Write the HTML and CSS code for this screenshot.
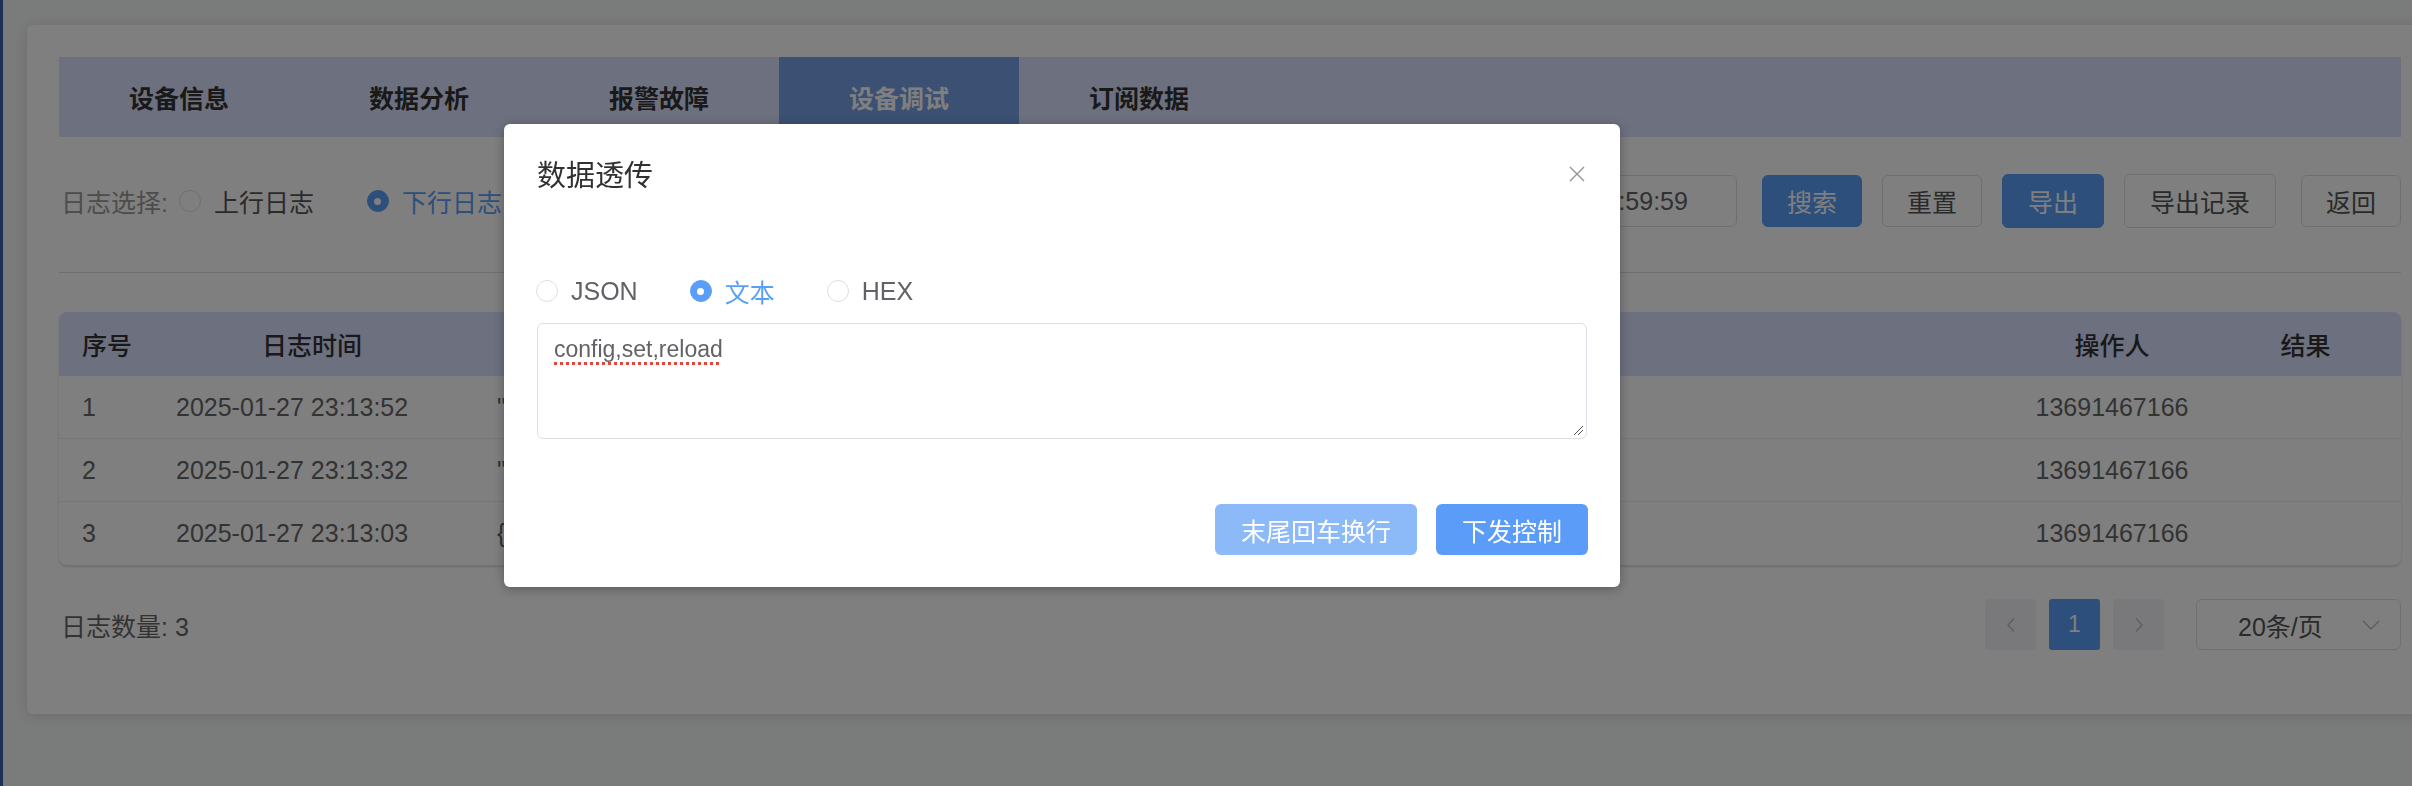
FILE: index.html
```html
<!DOCTYPE html>
<html lang="zh-CN">
<head>
<meta charset="utf-8">
<title>设备调试</title>
<link rel="stylesheet" href="styles.css">
</head>
<body>
<div class="app">
  <aside class="side-edge"></aside>
  <main class="main">
    <section class="card">
      <nav class="tabs">
        <div class="tab">设备信息</div>
        <div class="tab">数据分析</div>
        <div class="tab">报警故障</div>
        <div class="tab tab-active">设备调试</div>
        <div class="tab">订阅数据</div>
      </nav>

      <div class="filter">
        <div class="filter-left">
          <span class="filter-label">日志选择:</span>
          <label class="radio"><span class="radio-dot"></span><span class="radio-text">上行日志</span></label>
          <label class="radio radio-checked"><span class="radio-dot"></span><span class="radio-text">下行日志</span></label>
        </div>
        <div class="filter-right">
          <div class="date-input"><span>2025-01-27 00:00:00</span><span class="date-sep">至</span><span>2025-01-27 23:59:59</span></div>
          <button class="btn btn-primary">搜索</button>
          <button class="btn">重置</button>
          <button class="btn btn-primary btn-tall">导出</button>
          <button class="btn btn-tall">导出记录</button>
          <button class="btn btn-back">返回</button>
        </div>
      </div>

      <div class="divider"></div>

      <div class="table">
        <div class="tr thead">
          <div class="td c-idx">序号</div>
          <div class="td c-time c-center">日志时间</div>
          <div class="td c-center">日志内容</div>
          <div class="td c-center">操作人</div>
          <div class="td c-center">结果</div>
        </div>
        <div class="tr">
          <div class="td c-idx">1</div>
          <div class="td c-time">2025-01-27 23:13:52</div>
          <div class="td c-content">"config,set,reload"</div>
          <div class="td c-center">13691467166</div>
          <div class="td c-center"></div>
        </div>
        <div class="tr">
          <div class="td c-idx">2</div>
          <div class="td c-time">2025-01-27 23:13:32</div>
          <div class="td c-content">"config,get,all"</div>
          <div class="td c-center">13691467166</div>
          <div class="td c-center"></div>
        </div>
        <div class="tr">
          <div class="td c-idx">3</div>
          <div class="td c-time">2025-01-27 23:13:03</div>
          <div class="td c-content">{"cmd":"reboot"}</div>
          <div class="td c-center">13691467166</div>
          <div class="td c-center"></div>
        </div>
      </div>

      <div class="pager">
        <span class="pager-total">日志数量: 3</span>
        <div class="pager-right">
          <button class="page-btn page-nav" aria-label="上一页">
            <svg width="10" height="16" viewBox="0 0 10 16"><path d="M8 1.5 L2 8 L8 14.5" fill="none" stroke="#b8bcc4" stroke-width="1.4"/></svg>
          </button>
          <button class="page-btn page-current">1</button>
          <button class="page-btn page-nav" aria-label="下一页">
            <svg width="10" height="16" viewBox="0 0 10 16"><path d="M2 1.5 L8 8 L2 14.5" fill="none" stroke="#b8bcc4" stroke-width="1.4"/></svg>
          </button>
          <div class="page-size">
            <span class="page-size-text">20条/页</span>
            <svg class="page-size-arrow" width="18" height="10" viewBox="0 0 18 10"><path d="M1 1 L9 9 L17 1" fill="none" stroke="#b8bcc4" stroke-width="1.4"/></svg>
          </div>
        </div>
      </div>
    </section>
  </main>
</div>

<div class="mask"></div>

<div class="dialog" role="dialog" aria-label="数据透传">
  <div class="dialog-header">
    <span class="dialog-title">数据透传</span>
    <button class="dialog-close" aria-label="关闭">
      <svg width="16" height="16" viewBox="0 0 16 16"><path d="M1 1 L15 15 M15 1 L1 15" fill="none" stroke="#909399" stroke-width="1.4"/></svg>
    </button>
  </div>
  <div class="dialog-body">
    <div class="dialog-radios">
      <label class="radio m-radio"><span class="radio-dot"></span><span class="radio-text">JSON</span></label>
      <label class="radio m-radio radio-checked"><span class="radio-dot"></span><span class="radio-text">文本</span></label>
      <label class="radio m-radio"><span class="radio-dot"></span><span class="radio-text">HEX</span></label>
    </div>
    <div class="textarea" role="textbox" aria-multiline="true">
      <span class="misspelled">config,set,reload</span>
      <svg class="grip" width="12" height="12" viewBox="0 0 12 12"><path d="M11 2 L2 11 M11 6 L6 11" fill="none" stroke="#555" stroke-width="1"/></svg>
    </div>
  </div>
  <div class="dialog-footer">
    <button class="d-btn d-btn-light">末尾回车换行</button>
    <button class="d-btn d-btn-primary">下发控制</button>
  </div>
</div>
</body>
</html>
```

FILE: styles.css
```css
* { box-sizing: border-box; }

html, body {
  margin: 0;
  padding: 0;
  width: 2412px;
  height: 786px;
  overflow: hidden;
  font-family: "Liberation Sans", "Noto Sans CJK SC", sans-serif;
  font-size: 25px;
  color: #606266;
  background: #f5f6f7;
}

button {
  font-family: inherit;
  cursor: pointer;
}

.app {
  display: flex;
  height: 786px;
}

.side-edge {
  width: 3px;
  flex-shrink: 0;
  background: #3e62a6;
}

.main {
  flex: 1;
  min-width: 0;
  overflow: hidden;
  padding: 25px 0 0 24px;
  background: #f5f6f7;
}

.card {
  width: 2406px;
  background: #ffffff;
  border-radius: 6px;
  box-shadow: 0 2px 14px rgba(0, 0, 0, 0.12);
  padding: 32px 32px 64px 32px;
}

/* Tabs */
.tabs {
  display: flex;
  height: 80px;
  background: #dbe1fe;
}

.tab {
  width: 240px;
  display: flex;
  align-items: center;
  justify-content: center;
  font-weight: 700;
  color: #333333;
  font-size: 25px;
}

.tab-active {
  background: #77a0e6;
  color: #ffffff;
}

/* Filter row */
.filter {
  margin-top: 37px;
  height: 54px;
  display: flex;
  align-items: center;
  justify-content: space-between;
}

.filter-left {
  display: flex;
  align-items: center;
  padding-left: 2px;
}

.filter-label {
  color: #9a9a9a;
  margin-right: 11px;
}

.radio {
  display: inline-flex;
  align-items: center;
  margin-right: 53px;
  color: #555555;
}

.radio-dot {
  width: 22px;
  height: 22px;
  border-radius: 50%;
  border: 1px solid #dcdfe6;
  background: #ffffff;
  margin-right: 13px;
  flex-shrink: 0;
  position: relative;
}

.radio-checked .radio-dot {
  background: #5b9ef9;
  border-color: #5b9ef9;
}

.radio-checked .radio-dot::after {
  content: "";
  position: absolute;
  left: 50%;
  top: 50%;
  width: 7px;
  height: 7px;
  margin: -3.5px 0 0 -3.5px;
  border-radius: 50%;
  background: #ffffff;
}

.radio-checked .radio-text {
  color: #5b9ef9;
}

.filter-right {
  display: flex;
  align-items: center;
  gap: 20px;
}

.date-input {
  width: 560px;
  height: 52px;
  border: 1px solid #dcdfe6;
  border-radius: 6px;
  display: flex;
  align-items: center;
  justify-content: flex-end;
  padding-right: 48px;
  color: #606266;
  margin-right: 5px;
  white-space: nowrap;
}

.date-sep {
  margin: 0 14px;
}

.btn {
  height: 52px;
  padding: 0 24px;
  border: 1px solid #dcdfe6;
  border-radius: 6px;
  background: #ffffff;
  color: #555555;
  font-size: 25px;
  white-space: nowrap;
}

.btn-primary {
  background: #5b9ef9;
  border-color: #5b9ef9;
  color: #ffffff;
}

.btn-tall {
  height: 54px;
  padding: 0 25px;
}

.btn-back {
  margin-left: 5px;
}

.divider {
  margin-top: 44px;
  height: 1px;
  background: #dcdfe6;
}

/* Table */
.table {
  margin-top: 39px;
  border-radius: 8px;
  overflow: hidden;
  box-shadow: 0 2px 3px rgba(0, 0, 0, 0.14);
}

.tr {
  display: grid;
  grid-template-columns: 91px 324px 1fr 196px 191px;
  height: 63px;
  border-bottom: 1px solid #ebeef5;
  align-items: center;
  color: #666666;
}

.tr:last-child {
  border-bottom: none;
}

.thead {
  height: 64px;
  background: #dbe1fe;
  border-bottom: none;
  color: #333333;
  font-weight: 500;
}

.td {
  white-space: nowrap;
  overflow: hidden;
}

.c-idx { padding-left: 23px; }
.c-time { padding-left: 26px; }
.c-content { padding-left: 23px; }
.c-center { text-align: center; padding-left: 0; }

/* Pager */
.pager {
  margin-top: 34px;
  height: 51px;
  display: flex;
  align-items: center;
  justify-content: space-between;
}

.pager-total {
  padding-left: 2px;
  color: #666666;
}

.pager-right {
  display: flex;
  align-items: center;
  gap: 13px;
}

.page-btn {
  width: 51px;
  height: 51px;
  border: none;
  border-radius: 3px;
  display: flex;
  align-items: center;
  justify-content: center;
  padding: 0;
}

.page-nav {
  background: #f2f3f6;
}

.page-current {
  background: #5b9ef9;
  color: #ffffff;
  font-size: 23px;
}

.page-size {
  margin-left: 19px;
  width: 205px;
  height: 51px;
  border: 1px solid #dcdfe6;
  border-radius: 6px;
  display: flex;
  align-items: center;
  justify-content: space-between;
  padding: 0 20px 0 41px;
  color: #555555;
}

/* Mask and dialog */
.mask {
  position: fixed;
  inset: 0;
  background: rgba(0, 0, 0, 0.5);
  z-index: 10;
}

.dialog {
  position: fixed;
  left: 504px;
  top: 124px;
  width: 1116px;
  background: #ffffff;
  border-radius: 6px;
  box-shadow: 0 2px 12px rgba(0, 0, 0, 0.3);
  z-index: 11;
}

.dialog-header {
  position: relative;
  padding: 32px 33px 0;
  height: 72px;
}

.dialog-title {
  font-size: 29px;
  line-height: 40px;
  color: #303133;
}

.dialog-close {
  position: absolute;
  top: 42px;
  right: 35px;
  width: 16px;
  height: 16px;
  padding: 0;
  border: none;
  background: none;
  display: block;
}

.dialog-close svg { display: block; }

.dialog-body {
  padding: 80px 33px 0;
}

.dialog-radios {
  display: flex;
  align-items: center;
  height: 30px;
  margin-left: -1px;
}

.m-radio {
  margin-right: 52px;
  color: #606266;
}

.textarea {
  position: relative;
  margin-top: 17px;
  height: 116px;
  border: 1px solid #dcdfe6;
  border-radius: 6px;
  padding: 8px 16px;
  font-size: 23px;
  line-height: 34px;
  color: #606266;
}

.misspelled {
  text-decoration: underline dotted #e5453d;
  text-decoration-thickness: 3px;
  text-underline-offset: 5px;
}

.grip {
  position: absolute;
  right: 2px;
  bottom: 2px;
}

.dialog-footer {
  display: flex;
  justify-content: flex-end;
  gap: 19px;
  padding: 65px 32px 32px;
}

.d-btn {
  height: 51px;
  padding: 0 26px;
  border: none;
  border-radius: 6px;
  color: #ffffff;
  font-size: 25px;
  white-space: nowrap;
}

.d-btn-light {
  background: #8cbaf9;
}

.d-btn-primary {
  background: #5b9cf8;
}
```
